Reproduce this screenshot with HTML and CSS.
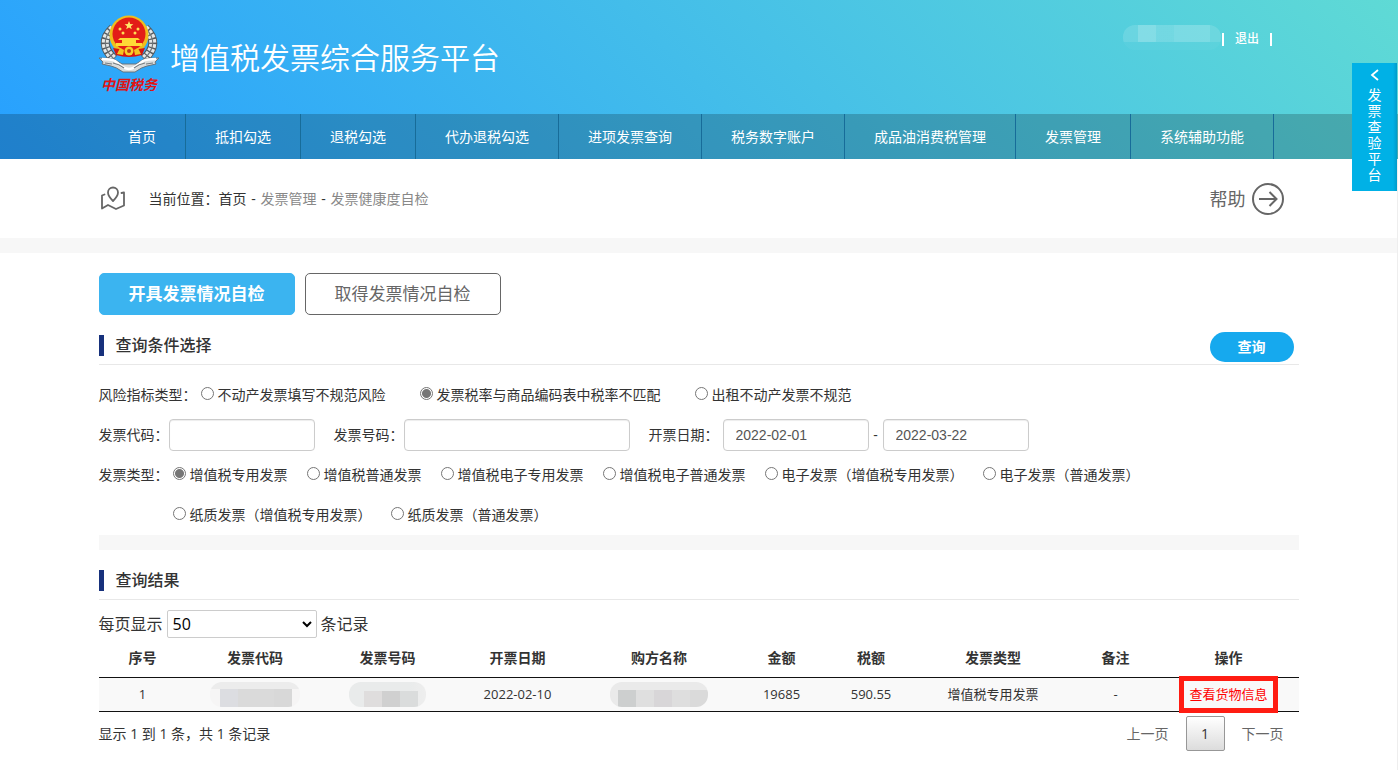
FILE: index.html
```
<!DOCTYPE html>
<html lang="zh-CN">
<head>
<meta charset="utf-8">
<meta name="viewport" content="width=device-width, initial-scale=1">
<title>增值税发票综合服务平台</title>
<link rel="stylesheet" href="styles.css">
</head>
<body>
<header class="top">
  <div class="wrap banner">
    <div class="brand">
      <div class="logo">
        <svg class="emblem" viewBox="0 0 60 58" aria-hidden="true">
          <g fill="none" stroke="#555a5e" stroke-width="9">
            <path d="M14 13C3 23 4 34 15 44"/><path d="M46 13c11 10 10 21-1 31"/>
          </g>
          <g fill="none" stroke="#e4e7e7" stroke-width="7" stroke-dasharray="3.200 1.400">
            <path d="M14 13C3 23 4 34 15 44"/><path d="M46 13c11 10 10 21-1 31"/>
          </g>
          <g fill="none" stroke="#6f7578" stroke-width="1.200">
            <path d="M14 13C3 23 4 34 15 44"/><path d="M46 13c11 10 10 21-1 31"/>
          </g>
          <circle cx="30" cy="20" r="19.500" fill="#f0bd1c"/>
          <circle cx="30" cy="19" r="16.500" fill="#e31d17"/>
          <path d="M30 6l1.200 3 3.200.2-2.500 2 .9 3.100-2.800-1.700-2.800 1.700.9-3.100-2.500-2 3.200-.2z" fill="#ffe66a"/>
          <g fill="#ffdf55"><circle cx="21" cy="14" r="1.500"/><circle cx="39" cy="14" r="1.500"/><circle cx="24" cy="18" r="1.500"/><circle cx="36" cy="18" r="1.500"/></g>
          <path d="M21 23h18l2 2H19zM23 25h14v3H23zM17 28h26v3H17z" fill="#ffd936"/>
          <path d="M14 33q16 3 32 0l-3 7q-13 4-26 0z" fill="#d5150f"/>
          <path d="M21 33l4 2-1 5-6-1zM39 33l-4 2 1 5 6-1z" fill="#f4c51f"/>
          <circle cx="30" cy="36" r="4.500" fill="#f7cf28"/><circle cx="30" cy="36" r="2" fill="#c43b12"/>
          <path d="M0 43q9 0 15 1 5 3 8 5h14q3-2 8-5 6-1 15-1l-4 4 1 2-9 2q-5 1-12 6h-12q-7-5-12-6l-9-2 1-2z" fill="#d9dcdc" stroke="#666c70" stroke-width=".9"/>
          <path d="M3 44q9 0 13 2 9 8 14 8t14-8q4-2 13-2" fill="none" stroke="#fff" stroke-width="2.500"/>
          <path d="M14 48q6 1 11 5M46 48q-6 1-11 5M6 48l7 1M54 48l-7 1" fill="none" stroke="#777d80" stroke-width="1.100"/>
        </svg>
        <span class="logo-text">中国税务</span>
      </div>
      <h1 class="site-title">增值税发票综合服务平台</h1>
    </div>
    <div class="account">
      <span class="masked-user"></span>
      <span class="divider"></span>
      <a href="#">退出</a>
      <span class="divider"></span>
    </div>
  </div>
  <nav class="nav">
    <div class="wrap nav-list">
      <a href="#">首页</a><a href="#">抵扣勾选</a><a href="#">退税勾选</a><a href="#">代办退税勾选</a><a href="#">进项发票查询</a><a href="#">税务数字账户</a><a href="#">成品油消费税管理</a><a href="#">发票管理</a><a href="#">系统辅助功能</a>
    </div>
  </nav>
</header>
<a class="side-tab" href="#">
  <svg viewBox="0 0 10 12" aria-hidden="true"><path d="M8 1L2 6l6 5" fill="none" stroke="#fff" stroke-width="1.800"/></svg>
  <span>发票查验平台</span>
</a>
<div class="page">
  <div class="location">
    <div class="wrap location-row">
      <svg class="pin" viewBox="0 0 26 26" fill="none" stroke="#666" stroke-width="1.800" stroke-linejoin="round" stroke-linecap="round" aria-hidden="true">
        <path d="M13 15C9.500 11.500 8 9 8 6.500a5 5 0 0 1 10 0c0 2.500-1.500 5-5 8.500z"/>
        <path d="M4.500 8.500L2 9.500V22.500l6-3.500 8 4 8-3.500V6.500L21.500 7"/>
      </svg>
      <p class="crumbs">当前位置：<a href="#">首页</a><span class="sep">-</span><span class="muted">发票管理</span><span class="sep">-</span><span class="muted">发票健康度自检</span></p>
      <a class="help" href="#">帮助
        <svg viewBox="0 0 32 32" fill="none" stroke="#666" stroke-width="2" aria-hidden="true"><circle cx="16" cy="16" r="15"/><path d="M7 16h17M17.500 9l7 7-7 7"/></svg>
      </a>
    </div>
  </div>
  <main class="wrap content">
    <div class="tabs">
      <button class="tab active" type="button">开具发票情况自检</button>
      <button class="tab" type="button">取得发票情况自检</button>
    </div>
    <form class="query">
      <div class="section-head">
        <h2>查询条件选择</h2>
        <button class="search" type="button">查询</button>
      </div>
      <div class="fields">
        <div class="row risk">
          <span class="caption">风险指标类型：</span>
          <label><input type="radio" name="risk">不动产发票填写不规范风险</label>
          <label><input type="radio" name="risk" checked>发票税率与商品编码表中税率不匹配</label>
          <label><input type="radio" name="risk">出租不动产发票不规范</label>
        </div>
        <div class="row boxes">
          <div class="field"><label for="code">发票代码：</label><input class="box" id="code" type="text"></div>
          <div class="field"><label for="num">发票号码：</label><input class="box wide" id="num" type="text"></div>
          <div class="field dates"><label for="from">开票日期：</label><input class="box" id="from" type="text" value="2022-02-01"><span class="dash">-</span><input class="box" type="text" aria-label="开票日期止" value="2022-03-22"></div>
        </div>
        <div class="row kinds">
          <span class="caption">发票类型：</span>
          <label><input type="radio" name="kind" checked>增值税专用发票</label>
          <label><input type="radio" name="kind">增值税普通发票</label>
          <label><input type="radio" name="kind">增值税电子专用发票</label>
          <label><input type="radio" name="kind">增值税电子普通发票</label>
          <label><input type="radio" name="kind">电子发票（增值税专用发票）</label>
          <label><input type="radio" name="kind">电子发票（普通发票）</label>
        </div>
        <div class="row kinds more">
          <label><input type="radio" name="kind">纸质发票（增值税专用发票）</label>
          <label><input type="radio" name="kind">纸质发票（普通发票）</label>
        </div>
      </div>
    </form>
    <section class="results">
      <div class="section-head"><h2>查询结果</h2></div>
      <div class="length">
        <label for="size">每页显示</label>
        <span class="select-wrap"><select id="size"><option>50</option></select><svg viewBox="0 0 10 7" aria-hidden="true"><path d="M1 1l4 4 4-4" fill="none" stroke="#000" stroke-width="2"/></svg></span>
        <span>条记录</span>
      </div>
      <table class="grid">
        <colgroup><col class="c-no"><col class="c-code"><col class="c-num"><col class="c-date"><col class="c-buyer"><col class="c-amount"><col class="c-tax"><col class="c-kind"><col class="c-note"><col class="c-action"></colgroup>
        <thead><tr><th>序号</th><th>发票代码</th><th>发票号码</th><th>开票日期</th><th>购方名称</th><th>金额</th><th>税额</th><th>发票类型</th><th>备注</th><th>操作</th></tr></thead>
        <tbody><tr><td>1</td><td><span class="mask mask-code"></span></td><td><span class="mask mask-num"></span></td><td>2022-02-10</td><td><span class="mask mask-buyer"></span></td><td>19685</td><td>590.55</td><td>增值税专用发票</td><td>-</td><td><a class="view" href="#">查看货物信息</a></td></tr></tbody>
      </table>
      <div class="foot">
        <span>显示 1 到 1 条，共 1 条记录</span>
        <div class="pager"><a href="#">上一页</a><button type="button">1</button><a href="#">下一页</a></div>
      </div>
    </section>
  </main>
</div>
</body>
</html>
```
FILE: styles.css
```
* { box-sizing: border-box; }
body {
  margin: 0;
  font: 14px/20px "Open Sans", "Noto Sans CJK SC", sans-serif;
  color: #333;
  background: #fff;
}
h1, h2, p { margin: 0; }
a { color: inherit; text-decoration: none; }
button, input, select { font: inherit; margin: 0; }
button { cursor: pointer; }
.wrap { max-width: 1200px; margin: 0 auto; }

.top { background: linear-gradient(45deg, #27a0ff, #5fdad5); color: #fff; }
.banner { display: flex; justify-content: space-between; height: 114px; }
.brand { display: flex; gap: 11px; }
.logo { width: 60px; padding-top: 15px; display: flex; flex-direction: column; align-items: center; }
.emblem { width: 60px; height: 58px; display: block; }
.logo-text { font: italic bold 14px/26px "Liberation Serif", "Noto Sans CJK SC", serif; color: #e01414; white-space: nowrap; }
.site-title { padding-top: 36px; font-size: 30px; line-height: 44px; font-weight: 350; }
.account { display: flex; align-items: center; gap: 11px; height: 28px; margin: 25px 27px 0 0; font-size: 12px; font-weight: 500; }
.masked-user {
  width: 98px; height: 25px; margin: 0 -10px 3px 0; border-radius: 12px;
  background: linear-gradient(90deg, rgba(255,255,255,.1) 15px, rgba(255,255,255,.25) 15px 33px, rgba(255,255,255,.15) 33px 51px, rgba(255,255,255,.2) 51px 87px, rgba(255,255,255,.1) 87px) top / 100% 17px no-repeat, rgba(255,255,255,.03);
}
.divider { width: 2px; height: 13px; background: #fff; }

.nav { background: rgba(0, 0, 0, .2); }
.nav-list { display: flex; }
.nav-list a { padding: 0 29px; line-height: 45px; border-right: 1px solid #176c99; white-space: nowrap; }

.side-tab {
  position: absolute; top: 63px; right: 1px; width: 45px; height: 128px; padding-top: 6px;
  display: flex; flex-direction: column; align-items: center; gap: 6px;
  background: linear-gradient(90deg, #00b1e6 41px, #009bca); color: #fff;
}
.side-tab svg { width: 10px; height: 12px; }
.side-tab span { width: 14px; font-size: 14px; line-height: 16px; word-break: break-all; }

.page { border-right: 1px solid #eee; min-height: 611px; }
.location { border-bottom: 15px solid #f7f7f7; }
.location-row { display: flex; align-items: center; height: 79px; }
.pin { width: 26px; height: 26px; margin: 0 23px 0 1px; }
.crumbs { flex: 1; }
.sep { display: inline-block; width: 14px; text-align: center; }
.muted { color: #888; }
.help { display: flex; align-items: center; gap: 6px; margin-right: 15px; font-size: 18px; color: #666; }
.help svg { width: 32px; height: 32px; }

.content { padding-top: 20px; }
.tabs { display: flex; gap: 10px; }
.tab { width: 196px; height: 42px; padding: 0; border: 1px solid #666; border-radius: 5px; background: #fff; color: #666; font-size: 17px; }
.tab.active { background: #3bb4f0; border-color: #3bb4f0; color: #fff; font-weight: bold; }

.section-head { display: flex; justify-content: space-between; align-items: flex-start; height: 33px; margin-top: 17px; border-bottom: 1px solid #e8e8e8; }
.section-head h2 { margin-top: 3px; padding-left: 12px; border-left: 5px solid #17317c; font-size: 16px; line-height: 21px; font-weight: 500; }
.search { width: 84px; height: 30px; margin-right: 5px; padding: 0; border: 0; border-radius: 15px; background: #16a9ee; color: #fff; font-weight: bold; }

.query { border-bottom: 15px solid #f7f7f7; }
.fields { padding-top: 10px; }
.row { display: flex; align-items: center; height: 40px; white-space: nowrap; }
.row .caption { margin-right: 4px; }
.risk label, .kinds label { display: flex; align-items: center; gap: 4px; }
.risk label + label { margin-left: 34px; }
.kinds label + label { margin-left: 19px; }
.more { padding-left: 74px; }
input[type="radio"] {
  appearance: none; width: 13px; height: 13px; margin-bottom: 3px;
  border: 1px solid #767676; border-radius: 50%; background: #fff;
}
input[type="radio"]:checked { background: radial-gradient(circle, #767676 4px, #fff 5px); }
.boxes { gap: 19px; }
.field { display: flex; align-items: center; }
.box {
  width: 146px; height: 32px; padding: 0 12px; border: 1px solid #ccc; border-radius: 4px; background: #fff;
  box-shadow: inset 0 1px 1px rgba(0, 0, 0, .075); color: #555; font: 14px/20px "Liberation Sans", Arial, sans-serif;
}
.box.wide { width: 226px; }
.dates label { margin-right: 4px; }
.dash { width: 14px; text-align: center; }

.length { display: flex; align-items: center; gap: 4px; padding: 10px 0 1px; font-size: 16px; }
.select-wrap { display: grid; align-items: center; }
.select-wrap select, .select-wrap svg { grid-area: 1 / 1; }
.select-wrap select { appearance: none; width: 150px; height: 28px; padding: 0 5px; border: 1px solid #ccc; border-radius: 2px; background: #fff; color: #000; }
.select-wrap svg { width: 10px; height: 7px; justify-self: end; margin-right: 5px; pointer-events: none; }

.grid { width: 100%; table-layout: fixed; border-collapse: separate; border-spacing: 0; text-align: center; }
.grid th { height: 39px; padding: 0; border-bottom: 1px solid #111; font-weight: bold; }
.grid td { height: 34px; padding: 0; border-bottom: 1px solid #111; background: #f9f9f9; font-size: 13px; line-height: 17px; }
.c-no { width: 88px; }
.c-code { width: 137px; }
.c-num { width: 128px; }
.c-date { width: 132px; }
.c-buyer { width: 151px; }
.c-amount { width: 94px; }
.c-tax { width: 85px; }
.c-kind { width: 159px; }
.c-note { width: 86px; }
.c-action { width: 140px; }
.mask { display: block; height: 25px; margin: 0 auto; border-radius: 12px; }
.mask-code { width: 90px; background: linear-gradient(90deg, #dcdde1 18px, #dadada 18px 54px, #d8d8d8 54px) 10px 7px / 72px 18px no-repeat, linear-gradient(#ececec 7px, #f6f5f5 7px); }
.mask-num { width: 77px; background: linear-gradient(90deg, #dfdddd 18px, #d0d0d0 18px 36px, #dadcdc 36px) 15px 9px / 54px 16px no-repeat, linear-gradient(90deg, #e9ebeb 60px, #eee); }
.mask-buyer { width: 98px; background: linear-gradient(90deg, #cdcfcf 18px, #dfdfdf 18px 36px, #d8d6d8 36px 54px, #dedede 54px 72px, #dadada 72px) 8px 8px / 90px 17px no-repeat, #eaeaea; }
.view { display: inline-block; color: #f00; outline: 5px solid #ff1c12; outline-offset: 5px; }

.foot { display: flex; justify-content: space-between; align-items: center; padding-top: 4px; }
.pager { display: flex; align-items: center; gap: 17px; margin-right: 15px; color: #666; }
.pager button { width: 39px; height: 35px; padding: 0; border: 1px solid #979797; border-radius: 2px; background: linear-gradient(#fff, #dcdcdc); color: #333; }
```
